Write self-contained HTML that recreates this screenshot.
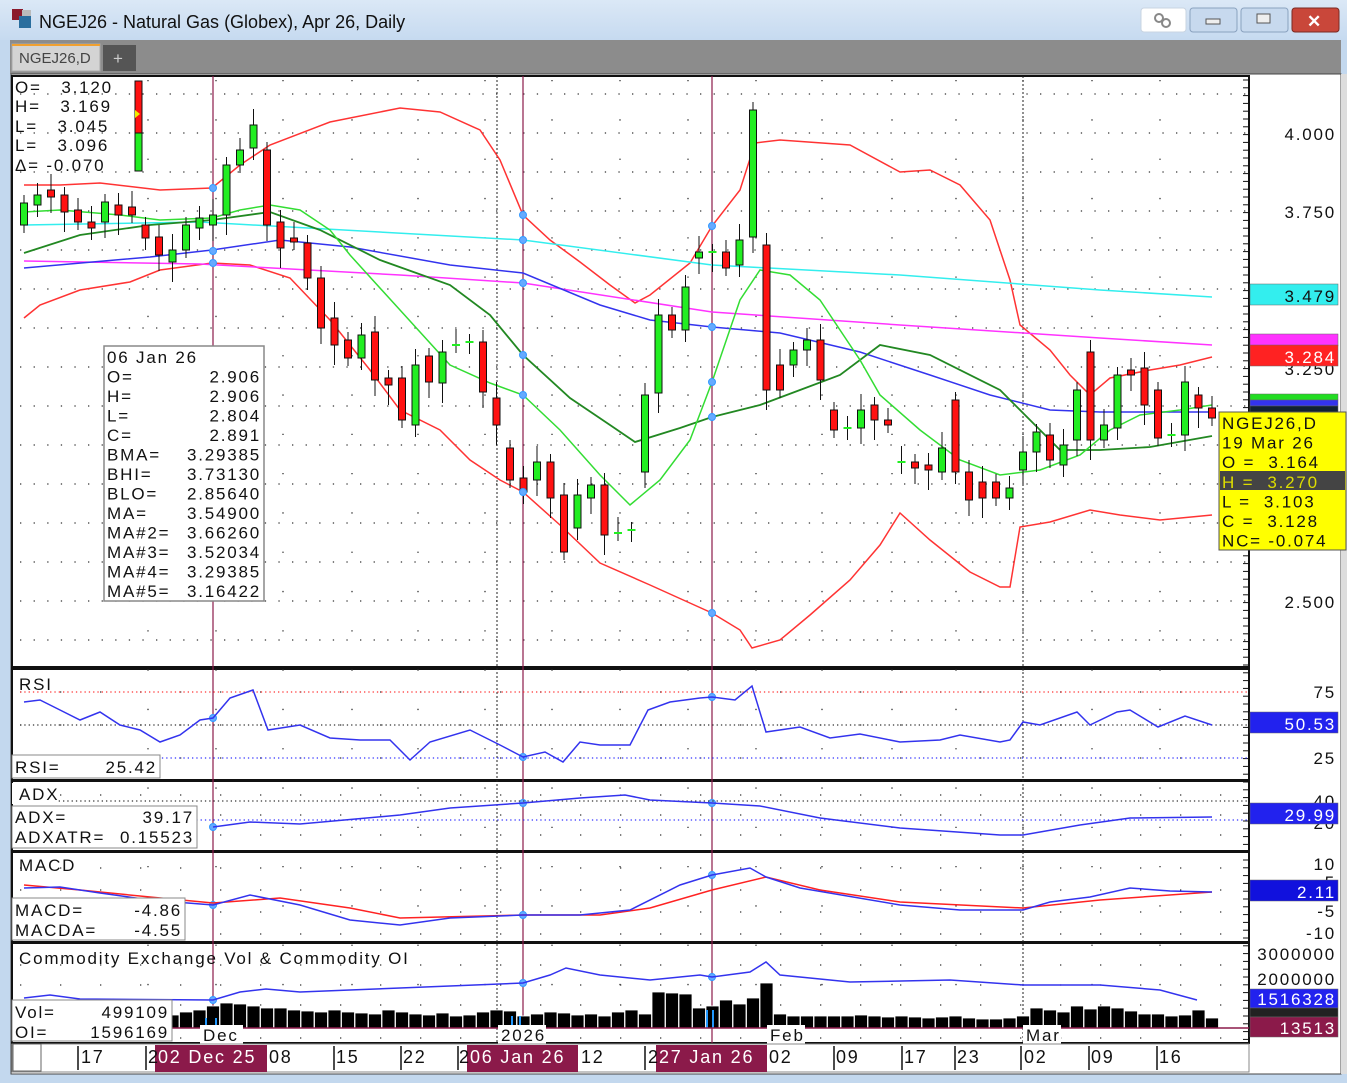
<!DOCTYPE html>
<html><head><meta charset="utf-8"><style>
body{margin:0;width:1347px;height:1083px;overflow:hidden;background:#c3d8ee;font-family:"Liberation Sans",sans-serif}
#title{position:absolute;left:0;top:0;width:1347px;height:40px;background:linear-gradient(#dbe8f6,#c6daf0)}
#tabs{position:absolute;left:10px;top:40px;width:1331px;height:34px;background:#8c8c8c}
svg{position:absolute;left:0;top:0}
</style></head><body>
<div id="title"></div><div id="tabs"></div>
<svg id="s" width="1347" height="1083" xmlns="http://www.w3.org/2000/svg" font-family="Liberation Sans, sans-serif">
<rect x="12" y="9" width="11" height="11" fill="#8b1a2c"/><rect x="19" y="16" width="12" height="12" fill="#2a6e9e"/><rect x="22" y="10" width="9" height="6" fill="#bbb"/>
<text x="39" y="28" font-size="18" fill="#111">NGEJ26 - Natural Gas (Globex), Apr 26, Daily</text>
<rect x="1141" y="8" width="45" height="24" rx="3" fill="#fff" stroke="#c8d4e2"/><circle cx="1159" cy="18" r="4" fill="none" stroke="#888" stroke-width="2"/><circle cx="1166" cy="23" r="4" fill="none" stroke="#888" stroke-width="2"/>
<rect x="1190" y="8" width="47" height="24" rx="3" fill="#c7d9ee" stroke="#8aa2bf"/><rect x="1206" y="19" width="14" height="5" fill="#eee" stroke="#555"/>
<rect x="1241" y="8" width="47" height="24" rx="3" fill="#c7d9ee" stroke="#8aa2bf"/><rect x="1257" y="14" width="13" height="9" fill="#eee" stroke="#555"/>
<rect x="1292" y="8" width="47" height="24" rx="3" fill="#c9473a" stroke="#7a2a22"/><text x="1307" y="27" font-size="17" font-weight="bold" fill="#fff">✕</text>
<rect x="12" y="44" width="88" height="27" fill="#d4d4d4" stroke="#aaa"/><rect x="12" y="44" width="88" height="2" fill="#f0a030"/>
<text x="19" y="63" font-size="15" fill="#444">NGEJ26,D</text>
<rect x="103" y="45" width="33" height="26" fill="#555"/><text x="113" y="64" font-size="17" fill="#ccc">+</text>
<rect x="11" y="74" width="1330" height="1000" fill="#fff" stroke="#444"/>
<rect x="1341" y="74" width="6" height="1000" fill="#ddd"/>
<g id="g"></g>
</svg>
<script>
const S=document.getElementById('g');let h='';
function pl(pts,c,w){h+=`<polyline points="${pts.map(p=>p.join(',')).join(' ')}" fill="none" stroke="${c}" stroke-width="${w||1.5}"/>`}
function tx(x,y,t,sz,c,extra){h+=`<text x="${x}" y="${y}" font-size="${sz||17}" fill="${c||'#111'}" letter-spacing="1.8" ${extra||''}>${t}</text>`}
function dots(y,x1,x2,c,step){h+=`<line x1="${x1}" y1="${y}" x2="${x2}" y2="${y}" stroke="${c||'#333'}" stroke-width="1.3" stroke-dasharray="1.3 ${step||38.7}"/>`}
[[76,667],[669,780],[781,851],[852,942],[943,1043]].forEach(p=>{h+=`<rect x="12" y="${p[0]}" width="1237" height="${p[1]-p[0]}" fill="#fff" stroke="#111" stroke-width="2"/>`});
h+=`<line x1="1249" y1="76" x2="1249" y2="1043" stroke="#111" stroke-width="2"/>`;
for(let y=94;y<667;y+=39){dots(y,20,1249,'#333',12.3)}
for(let y=692;y<780;y+=33)dots(y,20,1249,'#333',38.7);
[795,815,835].forEach(y=>dots(y,20,1249,'#333',38.7));
[868,890,912,934].forEach(y=>dots(y,20,1249,'#333',38.7));
[965,985,1005,1038].forEach(y=>dots(y,20,1249,'#333',38.7));
[148,216,283,352,418,485,552,620,688,756,822,892,956,1023,1092,1160].forEach(x=>{h+=`<line x1="${x}" y1="80" x2="${x}" y2="1043" stroke="#333" stroke-width="1.3" stroke-dasharray="1.3 38"/>`});
[497,1023].forEach(x=>{h+=`<line x1="${x}" y1="76" x2="${x}" y2="1043" stroke="#222" stroke-dasharray="2 2"/>`});
[213,523,712].forEach(x=>{h+=`<line x1="${x}" y1="76" x2="${x}" y2="1043" stroke="#8b1a4a" stroke-width="1.2"/>`});
for(let y=80;y<1043;y+=7.8){h+=`<line x1="1243" y1="${y}" x2="1249" y2="${y}" stroke="#111"/>`}
pl([[24,185],[60,185],[100,183],[160,190],[212,188],[240,165],[270,145],[330,122],[400,108],[440,112],[480,130],[500,160],[523,215],[550,240],[580,262],[610,285],[635,303],[650,295],[690,263],[712,226],[740,190],[755,143],[780,140],[850,145],[900,172],[930,170],[960,185],[990,220],[1010,280],[1020,325],[1050,350],[1070,375],[1090,395],[1110,378],[1150,370],[1180,365],[1212,357]],'#f33');
pl([[24,318],[40,305],[80,290],[130,282],[160,270],[212,263],[250,265],[290,278],[330,320],[370,370],[400,410],[440,430],[470,460],[500,480],[523,492],[560,525],[600,563],[650,585],[712,613],[740,630],[752,648],[780,640],[810,615],[850,580],[880,545],[900,513],[930,540],[970,572],[1000,587],[1010,587],[1020,527],[1050,522],[1090,510],[1120,515],[1160,520],[1212,515]],'#f33');
pl([[24,225],[200,222],[523,240],[712,265],[900,275],[1100,290],[1212,297]],'#3ee');
pl([[24,261],[200,264],[400,275],[523,283],[712,312],[900,325],[1100,338],[1212,345]],'#f3f');
pl([[24,268],[150,257],[212,250],[280,240],[350,247],[450,265],[523,273],[600,305],[650,320],[712,327],[780,333],[860,352],[930,375],[990,395],[1050,410],[1100,412],[1212,412]],'#33e');
pl([[24,253],[80,235],[150,225],[212,220],[270,212],[320,230],[380,260],[450,285],[490,315],[523,355],[570,398],[610,425],[635,442],[680,428],[712,417],[760,405],[800,390],[840,375],[880,345],[930,355],[1000,390],[1030,420],[1060,450],[1100,450],[1150,447],[1212,436]],'#282',1.8);
pl([[24,212],[60,210],[120,215],[160,220],[212,218],[240,210],[270,205],[300,210],[330,230],[350,255],[400,310],[450,365],[490,383],[523,395],[560,430],[600,475],[630,505],[660,480],[690,440],[712,382],[740,300],[760,270],[790,275],[820,300],[860,360],[880,395],[920,430],[960,460],[1000,475],[1040,470],[1080,455],[1110,430],[1140,415],[1180,410],[1212,405]],'#3d3');
const C=[[225,203],[205,195],[190,197],[195,212],[210,222],[222,228],[222,202],[205,215],[207,215],[225,238],[237,255],[262,250],[250,225],[228,218],[225,215],[215,165],[165,150],[148,125],[150,225],[222,248],[238,242],[243,278],[278,328],[318,345],[340,358],[358,335],[332,380],[378,385],[378,420],[425,365],[356,382],[383,352],[345,345],[342,342],[342,392],[398,425],[448,480],[478,492],[480,462],[462,498],[495,552],[528,495],[498,485],[485,535],[533,533],[530,530],[472,395],[393,315],[315,330],[330,287],[258,252],[252,252],[252,268],[265,240],[237,110],[245,390],[365,390],[365,350],[350,340],[340,380],[410,430],[428,428],[428,410],[405,420],[420,425],[462,462],[462,468],[465,470],[472,448],[400,472],[472,500],[482,498],[482,498],[498,488],[470,452],[452,432],[435,460],[465,445],[440,390],[352,440],[440,425],[428,375],[370,375],[368,405],[390,438],[435,435],[435,382],[395,408],[408,418]];
C.forEach((c,i)=>{const x=24+i*13.5;const t=Math.min(c[0],c[1]),b=Math.max(c[0],c[1]);const hi=t-8-(i%3)*4,lo=b+8+(i%4)*4;
h+=`<line x1="${x}" y1="${hi}" x2="${x}" y2="${lo}" stroke="#111"/>`;
const col=c[1]<c[0]?'#2e2':(c[1]>c[0]?'#f11':'#2e2');
if(b-t<2)h+=`<line x1="${x-4}" y1="${t}" x2="${x+4}" y2="${t}" stroke="${col}" stroke-width="2"/>`;else h+=`<rect x="${x-3.5}" y="${t}" width="7" height="${b-t}" fill="${col}" stroke="#111"/>`;});
h+=`<rect x="135" y="81" width="7" height="90" fill="#f11" stroke="#111"/><rect x="135" y="133" width="7" height="38" fill="#2e2" stroke="#111"/><path d="M135 110 l5 4 -5 4z" fill="#ee0"/>`;
[[213,188],[213,251],[213,263],[523,215],[523,240],[523,283],[523,355],[523,395],[523,492],[712,226],[712,327],[712,382],[712,417],[712,613],[213,718],[523,757],[712,697],[213,827],[523,803],[712,803],[213,905],[523,915],[712,875],[213,1000],[523,983],[712,977]].forEach(p=>h+=`<circle cx="${p[0]}" cy="${p[1]}" r="3.5" fill="#6af" stroke="#39f"/>`);
dots(692,20,1249,'#f33',3);dots(725,20,1249,'#333',3);dots(758,20,1249,'#33f',3);
pl([[24,702],[40,700],[60,710],[80,720],[100,712],[120,725],[140,730],[160,742],[180,735],[200,720],[213,718],[230,698],[253,690],[268,730],[300,725],[330,738],[360,740],[390,740],[410,760],[430,742],[470,730],[500,745],[523,757],[545,752],[563,762],[580,742],[600,745],[630,745],[648,710],[670,702],[700,698],[712,697],[735,700],[752,686],[766,732],[800,727],[830,738],[860,734],[900,742],[940,740],[960,735],[1000,742],[1010,740],[1023,722],[1040,725],[1077,712],[1090,725],[1117,712],[1130,710],[1158,727],[1185,716],[1212,725]],'#33e');
dots(801,20,1249,'#333',3);dots(820,20,1249,'#33f',3);
pl([[213,827],[250,822],[300,824],[400,815],[450,808],[523,803],[580,798],[625,795],[650,800],[712,803],[760,806],[820,818],[900,828],[1000,835],[1023,835],[1080,825],[1130,818],[1212,817]],'#33e');
pl([[24,885],[80,890],[150,897],[213,903],[280,898],[350,908],[400,918],[523,915],[600,915],[650,908],[712,890],[766,877],[820,890],[900,902],[1023,908],[1100,900],[1212,892]],'#f22');
pl([[24,888],[60,887],[100,893],[150,900],[213,905],[250,895],[300,905],[350,920],[400,925],[450,918],[523,915],[580,915],[630,910],[680,885],[712,875],[750,868],[766,877],[800,888],[900,905],[960,910],[1023,910],[1050,902],[1090,897],[1130,888],[1170,891],[1212,892]],'#33e');
const V=[6,8,7,9,8,8,10,12,11,10,14,13,16,18,22,25,24,22,20,20,18,17,16,18,16,15,14,18,16,14,13,15,12,13,16,18,17,12,14,16,15,13,14,12,16,18,14,36,35,34,20,22,28,24,30,45,14,12,12,12,12,12,13,12,11,12,11,10,11,12,10,9,9,10,12,20,18,16,22,19,22,20,17,14,14,12,13,18,10];
V.forEach((v,i)=>{const x=24+i*13.5;if(x<172)return;h+=`<rect x="${x-6.5}" y="${1028-v}" width="13" height="${v}" fill="#000" stroke="#fff" stroke-width=".8"/>`;});
[[206,1018],[216,1018],[512,1016],[520,1016],[707,1010],[713,1010]].forEach(p=>h+=`<line x1="${p[0]}" y1="${p[1]}" x2="${p[0]}" y2="1028" stroke="#29f" stroke-width="2"/>`);
h+=`<line x1="12" y1="1028" x2="1249" y2="1028" stroke="#8b1a4a" stroke-width="1.5"/>`;
pl([[24,998],[50,995],[80,999],[213,1000],[240,992],[266,989],[300,992],[350,990],[400,988],[523,983],[550,975],[566,968],[600,975],[650,980],[700,975],[712,977],[750,972],[766,962],[780,975],[850,982],[950,980],[1023,985],[1060,985],[1100,985],[1160,990],[1197,1000]],'#33e');
tx(15,93,'O=&#160;&#160;&#160;3.120');tx(15,112,'H=&#160;&#160;&#160;3.169');tx(15,132,'L=&#160;&#160;&#160;3.045');tx(15,151,'L=&#160;&#160;&#160;3.096');tx(15,171,'Δ=&#160;-0.070');
h+=`<rect x="104" y="346" width="160" height="255" fill="#fff" stroke="#888" stroke-width="1.5"/>`;
const L=[['06 Jan 26',''],['O=','2.906'],['H=','2.906'],['L=','2.804'],['C=','2.891'],['BMA=','3.29385'],['BHI=','3.73130'],['BLO=','2.85640'],['MA=','3.54900'],['MA#2=','3.66260'],['MA#3=','3.52034'],['MA#4=','3.29385'],['MA#5=','3.16422']];
L.forEach((l,i)=>{tx(107,363+i*19.5,l[0]);if(l[1])tx(261,363+i*19.5,l[1],17,'#111','text-anchor="end"')});
tx(19,690,'RSI');h+=`<rect x="12" y="755" width="148" height="23" fill="#fff" stroke="#888"/>`;tx(15,773,'RSI=');tx(157,773,'25.42',17,'#111','text-anchor="end"');
h+=`<rect x="12" y="783" width="45" height="21" fill="#fff"/>`;tx(19,800,'ADX');
h+=`<rect x="12" y="806" width="185" height="42" fill="#fff" stroke="#888"/>`;tx(15,823,'ADX=');tx(194,823,'39.17',17,'#111','text-anchor="end"');tx(15,843,'ADXATR=');tx(194,843,'0.15523',17,'#111','text-anchor="end"');
tx(19,871,'MACD');h+=`<rect x="12" y="898" width="173" height="42" fill="#fff" stroke="#888"/>`;tx(15,916,'MACD=');tx(182,916,'-4.86',17,'#111','text-anchor="end"');tx(15,936,'MACDA=');tx(182,936,'-4.55',17,'#111','text-anchor="end"');
tx(19,964,'Commodity Exchange Vol &amp; Commodity OI',17,'#111','letter-spacing="2.6"');
h+=`<rect x="12" y="1000" width="160" height="41" fill="#fff" stroke="#888"/>`;tx(15,1018,'Vol=');tx(169,1018,'499109',17,'#111','text-anchor="end"');tx(15,1038,'OI=');tx(169,1038,'1596169',17,'#111','text-anchor="end"');
[[200,'Dec',43],[498,'2026',48],[767,'Feb',38],[1023,'Mar',38]].forEach(m=>{h+=`<rect x="${m[0]}" y="1025" width="${m[2]}" height="19" fill="#fff"/>`;tx(m[0]+3,1041,m[1],17,'#111','letter-spacing="0.5"')});
h+=`<rect x="12" y="1044" width="1237" height="28" fill="#fff" stroke="#888"/><rect x="13" y="1044" width="28" height="27" fill="#fff" stroke="#666"/>`;
[[155,267],[467,578],[656,767]].forEach(b=>h+=`<rect x="${b[0]}" y="1045" width="${b[1]-b[0]}" height="27" fill="#8b1a4a"/>`);
[78,146,334,401,458,645,834,902,955,1021,1089,1157].forEach(x=>h+=`<line x1="${x}" y1="1046" x2="${x}" y2="1070" stroke="#111" stroke-width="1.5"/>`);
[[81,'17'],[269,'08'],[336,'15'],[403,'22'],[581,'12'],[769,'02'],[836,'09'],[904,'17'],[957,'23'],[1024,'02'],[1091,'09'],[1159,'16']].forEach(l=>tx(l[0],1063,l[1],18,'#111','letter-spacing="0.5"'));
tx(148,1063,'2',18);tx(158,1063,'02 Dec 25',18,'#fff','letter-spacing="1.2"');tx(459,1063,'2',18);tx(470,1063,'06 Jan 26',18,'#fff','letter-spacing="1.2"');tx(648,1063,'2',18);tx(659,1063,'27 Jan 26',18,'#fff','letter-spacing="1.2"');
[[140,'4.000'],[218,'3.750'],[608,'2.500'],[698,'75'],[764,'25'],[807,'40'],[870,'10'],[917,'-5'],[939,'-10'],[960,'3000000'],[985,'2000000']].forEach(l=>tx(1336,l[0],l[1],17,'#111','text-anchor="end"'));
tx(1336,375,'3.250',17,'#111','text-anchor="end"');tx(1336,297,'3.500',17,'#111','text-anchor="end"');tx(1336,829,'20',17,'#111','text-anchor="end"');tx(1336,888,'5',17,'#111','text-anchor="end"');
function tag(y1,y2,bg,t,c){h+=`<rect x="1250" y="${y1}" width="88" height="${y2-y1}" fill="${bg}" stroke="#666" stroke-width=".5"/>`;if(t)tx(1336,y2-3,t,17,c||'#fff','text-anchor="end"')}
tag(284,305,'#3ee','3.479','#111');tag(334,346,'#f3f','');tag(345,366,'#f22','3.284');tag(394,400,'#2d2','');tag(400,406,'#33e','');tag(406,412,'#123','');
tag(712,733,'#22e','50.53');tag(803,824,'#22e','29.99');tag(880,901,'#11d','2.11');tag(989,1008,'#22e','1516328');tag(1008,1017,'#222','');tag(1017,1037,'#8b1a4a','13513');
h+=`<rect x="1219" y="412" width="127" height="138" fill="#ff0" stroke="#555"/><rect x="1220" y="471" width="125" height="19" fill="#444"/>`;
[['NGEJ26,D','#111'],['19 Mar 26','#111'],['O =&#160;&#160;3.164','#111'],['H =&#160;&#160;3.270','#dd0'],['L =&#160;&#160;3.103','#111'],['C =&#160;&#160;3.128','#111'],['NC= -0.074','#111']].forEach((l,i)=>tx(1222,429+i*19.6,l[0],17,l[1],'letter-spacing="1.8"'));
S.innerHTML=h;
</script>
</body></html>
